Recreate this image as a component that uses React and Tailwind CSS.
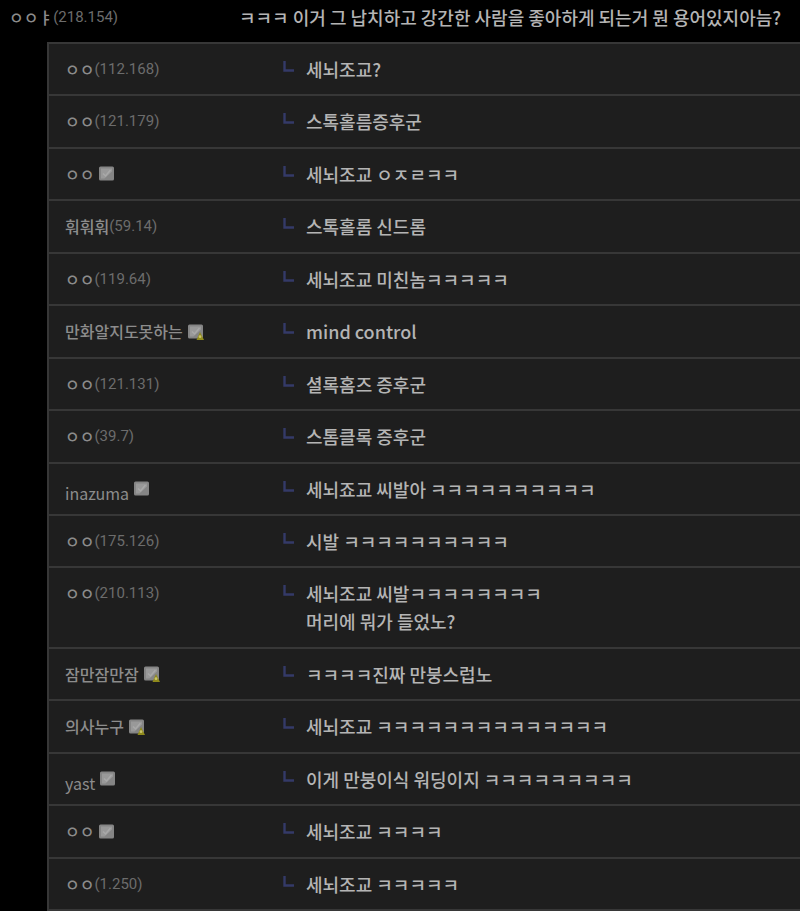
import React from 'react';

const replies = [
    { name: 'ㅇㅇ', ip: '112.168', lines: ['세뇌조교?'] },
    { name: 'ㅇㅇ', ip: '121.179', lines: ['스톡홀름증후군'] },
    { name: 'ㅇㅇ', badge: 'basic', lines: ['세뇌조교 ㅇㅈㄹㅋㅋ'] },
    { name: '훠훠훠', ip: '59.14', lines: ['스톡홀롬 신드롬'] },
    { name: 'ㅇㅇ', ip: '119.64', lines: ['세뇌조교 미친놈ㅋㅋㅋㅋㅋ'] },
    { name: '만화알지도못하는', badge: 'fixed', lines: ['mind control'] },
    { name: 'ㅇㅇ', ip: '121.131', lines: ['셜록홈즈 증후군'] },
    { name: 'ㅇㅇ', ip: '39.7', lines: ['스톰클록 증후군'] },
    { name: 'inazuma', badge: 'basic', latin: true, lines: ['세뇌죠교 씨발아 ㅋㅋㅋㅋㅋㅋㅋㅋㅋㅋ'] },
    { name: 'ㅇㅇ', ip: '175.126', lines: ['시발 ㅋㅋㅋㅋㅋㅋㅋㅋㅋㅋ'] },
    { name: 'ㅇㅇ', ip: '210.113', lines: ['세뇌조교 씨발ㅋㅋㅋㅋㅋㅋㅋㅋ', '머리에 뭐가 들었노?'] },
    { name: '잠만잠만잠', badge: 'fixed', lines: ['ㅋㅋㅋㅋ진짜 만붕스럽노'] },
    { name: '의사누구', badge: 'fixed', lines: ['세뇌조교 ㅋㅋㅋㅋㅋㅋㅋㅋㅋㅋㅋㅋㅋㅋ'] },
    { name: 'yast', badge: 'basic', latin: true, lines: ['이게 만붕이식 워딩이지 ㅋㅋㅋㅋㅋㅋㅋㅋㅋ'] },
    { name: 'ㅇㅇ', badge: 'basic', lines: ['세뇌조교 ㅋㅋㅋㅋ'] },
    { name: 'ㅇㅇ', ip: '1.250', lines: ['세뇌조교 ㅋㅋㅋㅋㅋ'] },
];

const MemberBadge = ({ type }) => (
    <svg viewBox="0 0 17 17" className="w-[17px] h-[17px] shrink-0" aria-hidden="true">
        <rect x="1" y="1.5" width="15" height="14" rx="1.5" fill="#858585" />
        <path d="M3 3.5h11v3L6.5 13.5H3z" fill="#999999" />
        <path d="M5 8.5l2.5 2.5L12.5 5" fill="none" stroke="#a9a9a9" strokeWidth="1.5" />
        {type === 'fixed' && (
            <>
                <path d="M13 9l4 8H9.5z" fill="#8f8a1c" />
                <circle cx="13" cy="13.7" r="1.4" fill="#c9c36a" />
            </>
        )}
    </svg>
);

const ReplyMark = () => (
    <svg viewBox="0 0 11 11" className="w-[11px] h-[11px] mt-[6px] shrink-0" aria-hidden="true">
        <path d="M1.5 0v9.5H11" fill="none" stroke="#343a68" strokeWidth="2.4" />
    </svg>
);

const Writer = ({ name, ip, badge, latin }) => (
    <div className={`flex items-center text-base leading-7 text-[#8c8c8c] ${latin ? '' : 'font-medium'}`}>
        <span className={latin ? 'pt-1 -mb-1' : ''}>{name}</span>
        {ip && <span className="font-[Roboto] text-[15px] font-normal text-[#6c6c6c]">({ip})</span>}
        {badge && <span className="ml-1"><MemberBadge type={badge} /></span>}
    </div>
);

const Reply = ({ lines, ...writer }) => (
    <li className="flex grow items-start border-b-2 border-[#373737] pt-[11px] pb-[11px] pl-4">
        <div className="w-[218px] shrink-0"><Writer {...writer} /></div>
        <ReplyMark />
        <div className="ml-3 text-lg leading-7 font-medium text-[#b4b4b4]">
            {lines.map((line) => <p key={line}>{line}</p>)}
        </div>
    </li>
);

const App = () => (
    <main className="flex min-h-screen flex-col border-b-2 border-white bg-black font-['Noto_Sans_CJK_KR',sans-serif]">
        <div className="flex items-start pt-[3px] pb-[11px] pl-[9px]">
            <div className="w-[230px] shrink-0"><Writer name="ㅇㅇㅑ" ip="218.154" /></div>
            <p className="text-lg leading-7 font-medium text-[#b4b4b4]">ㅋㅋㅋ 이거 그 납치하고 강간한 사람을 좋아하게 되는거 뭔 용어있지아늠?</p>
        </div>
        <ul className="ml-[47px] flex grow flex-col border-t-2 border-l-2 border-[#373737] bg-[#1e1e1e]">
            {replies.map((reply, i) => <Reply key={i} {...reply} />)}
        </ul>
    </main>
);

export default App;
